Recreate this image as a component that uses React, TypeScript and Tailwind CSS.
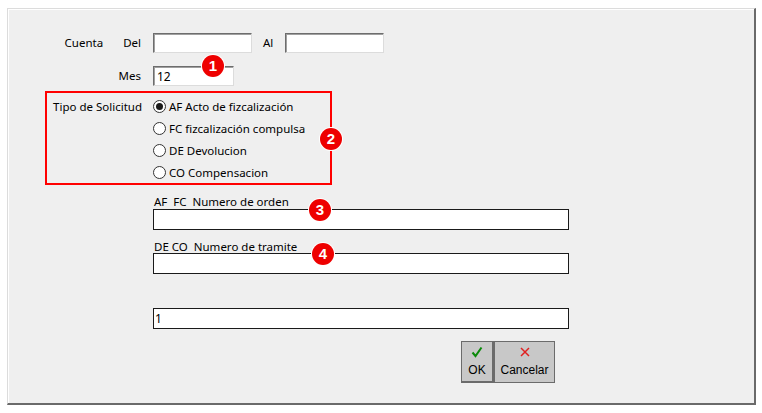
import React from "react";

function Badge({ n, className }: { n: string; className: string }) {
    return (
        <div
            className={`absolute size-[22px] rounded-full bg-[#ee0000] text-white font-bold text-[15px] leading-[22px] text-center shadow-[0_0_0_1px_#ffffff] ${className}`}
            style={{ fontFamily: '"Liberation Sans", Arial, sans-serif' }}
        >
            {n}
        </div>
    );
}

function SunkenInput({ width, value }: { width: string; value?: string }) {
    return (
        <div
            className={`${width} h-[20px] bg-white border border-t-[#6d6d6d] border-l-[#6d6d6d] border-r-[#dcdcdc] border-b-[#dcdcdc] shadow-[inset_1px_1px_0_#a0a0a0] pl-[3px] text-[12px] leading-[19px]`}
        >
            {value}
        </div>
    );
}

function FlatInput({ value }: { value?: string }) {
    return (
        <div className="ml-[145px] w-[416px] h-[21px] bg-white border border-[#1a1a1a] pl-[1px] text-[12px] leading-[19px]">
            {value}
        </div>
    );
}

function Radio({ label, checked }: { label: string; checked?: boolean }) {
    return (
        <div className="h-[22px] flex items-center">
            <div className="size-[13px] rounded-full border border-[#333333] bg-white flex items-center justify-center">
                {checked && <div className="size-[7px] rounded-full bg-[#1a1a1a]" />}
            </div>
            <span className="ml-[3px]">{label}</span>
        </div>
    );
}

export default function App() {
    return (
        <div
            className="w-[762px] h-[413px] bg-white pt-[8px] pl-[7px] text-[11.5px] text-black"
            style={{ fontFamily: '"Noto Sans", "Open Sans", sans-serif' }}
        >
            <div className="relative w-[749px] h-[397px] bg-[#efefef] border-t border-l border-[#dcdcdc] border-r-2 border-b-2 border-r-[#6a6a6a] border-b-[#6a6a6a] shadow-[inset_1px_1px_0_#ffffff] flex flex-col">
                {/* Cuenta */}
                <div className="mt-[24px] h-[20px] flex items-center">
                    <div className="w-[145px] flex justify-end pr-[12px]">
                        <span>Cuenta</span>
                        <span className="ml-[20px]">Del</span>
                    </div>
                    <SunkenInput width="w-[99px]" />
                    <span className="ml-[11px] w-[22px]">Al</span>
                    <SunkenInput width="w-[99px]" />
                </div>

                {/* Mes */}
                <div className="mt-[13px] h-[20px] flex items-center">
                    <div className="w-[145px] text-right pr-[12px]">Mes</div>
                    <SunkenInput width="w-[81px]" value="12" />
                </div>

                {/* Tipo de Solicitud */}
                <div className="mt-[5px] ml-[37px] w-[287px] h-[94px] border-2 border-[#ff0000] flex pt-[3px]">
                    <div className="w-[106px] pr-[11px] text-right h-[22px] leading-[22px]">Tipo de Solicitud</div>
                    <div className="flex flex-col">
                        <Radio label="AF Acto de fizcalización" checked />
                        <Radio label="FC fizcalización compulsa" />
                        <Radio label="DE Devolucion" />
                        <Radio label="CO Compensacion" />
                    </div>
                </div>

                <div className="mt-[10px] ml-[146px] h-[14px] leading-[14px] whitespace-pre">AF  FC  Numero de orden</div>
                <FlatInput />
                <div className="mt-[10px] ml-[146px] h-[13px] leading-[13px] whitespace-pre">DE CO  Numero de tramite</div>
                <FlatInput />
                <div className="mt-[34px]">
                    <FlatInput value="1" />
                </div>

                {/* Buttons */}
                <div
                    className="mt-[12px] ml-[453px] flex text-[12px]"
                    style={{ fontFamily: '"Liberation Sans", Arial, sans-serif' }}
                >
                    <div className="w-[33px] h-[42px] bg-[#c8c8c8] border-t border-l border-r-2 border-b-2 border-[#6b6b6b] flex flex-col items-center pt-[4px]">
                        <svg width="12" height="12" viewBox="0 0 12 12">
                            <path d="M1.5 6.5 L4.5 10 L10.5 1.5" stroke="#0a8a0a" strokeWidth="2" fill="none" />
                        </svg>
                        <span className="mt-[5px] leading-[14px]">OK</span>
                    </div>
                    <div className="w-[61px] h-[42px] bg-[#c8c8c8] border border-[#6b6b6b] flex flex-col items-center pt-[4px]">
                        <svg width="12" height="12" viewBox="0 0 12 12">
                            <path d="M2 2 L10 10 M10 2 L2 10" stroke="#e02020" strokeWidth="1.5" fill="none" />
                        </svg>
                        <span className="mt-[5px] leading-[14px]">Cancelar</span>
                    </div>
                </div>

                <Badge n="1" className="left-[194px] top-[46px]" />
                <Badge n="2" className="left-[312px] top-[119px]" />
                <Badge n="3" className="left-[301px] top-[190px]" />
                <Badge n="4" className="left-[304px] top-[234px]" />
            </div>
        </div>
    );
}
